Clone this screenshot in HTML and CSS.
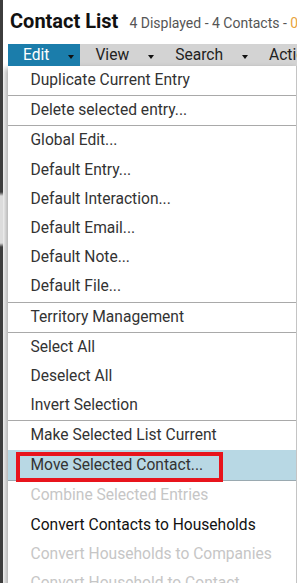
FILE: index.html
```html
<!DOCTYPE html>
<html lang="en">
<head>
    <meta charset="UTF-8">
    <meta name="viewport" content="width=device-width, initial-scale=1.0">
    <title>Contact List</title>
    <link rel="stylesheet" href="styles.css">
</head>
<body>
    <div class="window">
        <div class="edge"></div>
        <div class="page">
            <header class="title-row">
                <h1>Contact List</h1>
                <span class="count">4 Displayed - 4 Contacts - <span class="selected">0 Selected</span></span>
            </header>

            <nav class="menubar">
                <div class="tab active">Edit <span class="caret"></span></div>
                <div class="tab">View <span class="caret"></span></div>
                <div class="tab">Search <span class="caret"></span></div>
                <div class="tab">Actions <span class="caret"></span></div>
            </nav>

            <ul class="dropdown">
                <li class="item">Duplicate Current Entry</li>
                <li class="sep"></li>
                <li class="item">Delete selected entry...</li>
                <li class="sep"></li>
                <li class="item">Global Edit...</li>
                <li class="item">Default Entry...</li>
                <li class="item">Default Interaction...</li>
                <li class="item">Default Email...</li>
                <li class="item">Default Note...</li>
                <li class="item">Default File...</li>
                <li class="sep"></li>
                <li class="item">Territory Management</li>
                <li class="sep"></li>
                <li class="item">Select All</li>
                <li class="item">Deselect All</li>
                <li class="item">Invert Selection</li>
                <li class="sep"></li>
                <li class="item">Make Selected List Current</li>
                <li class="item current">Move Selected Contact...<span class="callout"></span></li>
                <li class="item disabled">Combine Selected Entries</li>
                <li class="item strong">Convert Contacts to Households</li>
                <li class="item disabled">Convert Households to Companies</li>
                <li class="item disabled">Convert Household to Contact</li>
            </ul>
        </div>
    </div>
</body>
</html>
```

FILE: styles.css
```css
body {
    margin: 0;
    font-family: Roboto, "Liberation Sans", sans-serif;
    background-color: #fff;
    color: #333;
    height: 583px;
    overflow: hidden;
}

.window {
    display: flex;
    height: 100%;
}

.edge {
    flex: none;
    width: 3px;
    background: linear-gradient(to bottom, #3d3d3d 0, #3d3d3d 192px, #dcdcdc 196px, #dcdcdc 243px, #3d3d3d 247px, #3d3d3d 100%);
}

.page {
    flex: 1;
    min-width: 0;
    padding-left: 5px;
    overflow: hidden;
}

.title-row {
    display: flex;
    align-items: baseline;
    white-space: nowrap;
    height: 44px;
    padding: 9px 0 0 2px;
    box-sizing: border-box;
}

h1 {
    margin: 0;
    font-size: 20px;
    font-weight: 700;
    line-height: 24px;
    color: #111;
}

.count {
    margin-left: 11px;
    font-size: 14px;
    color: #555;
}

.selected {
    color: #e8a33c;
}

.menubar {
    display: flex;
    height: 22px;
    background-color: #d3d3d3;
    white-space: nowrap;
    overflow: hidden;
}

.tab {
    display: flex;
    align-items: center;
    gap: 19px;
    padding: 0 6px 0 15px;
    font-size: 15.6px;
    color: #222;
}

.tab.active {
    background-color: #1b7dab;
    color: #fff;
}

.caret {
    width: 0;
    height: 0;
    margin-top: 3px;
    border-left: 3.5px solid transparent;
    border-right: 3.5px solid transparent;
    border-top: 4.5px solid #111;
}

.dropdown {
    list-style-type: none;
    margin: 0;
    padding: 0;
    width: 289px;
    box-sizing: border-box;
    background-color: #fff;
    border-right: 1px solid #c4c4c4;
    box-shadow: -3px 2px 5px rgba(0, 0, 0, 0.3);
    font-size: 15.6px;
}

.dropdown .item {
    height: 29.2px;
    line-height: 29.2px;
    padding-left: 22.5px;
    white-space: nowrap;
}

.dropdown .sep {
    height: 1px;
    background-color: #a9a9a9;
}

.dropdown .current {
    position: relative;
    height: 30px;
    line-height: 30px;
    background-color: #b8d8e4;
    border-bottom: 1px solid #9aa9b0;
}

.dropdown .disabled {
    color: #c6c6c6;
}

.dropdown .strong {
    color: #111;
}

/* red annotation box drawn over the highlighted entry */
.callout {
    position: absolute;
    left: 8px;
    top: 2px;
    width: 207px;
    height: 30px;
    box-sizing: border-box;
    border: 4px solid #e8141c;
}
```
